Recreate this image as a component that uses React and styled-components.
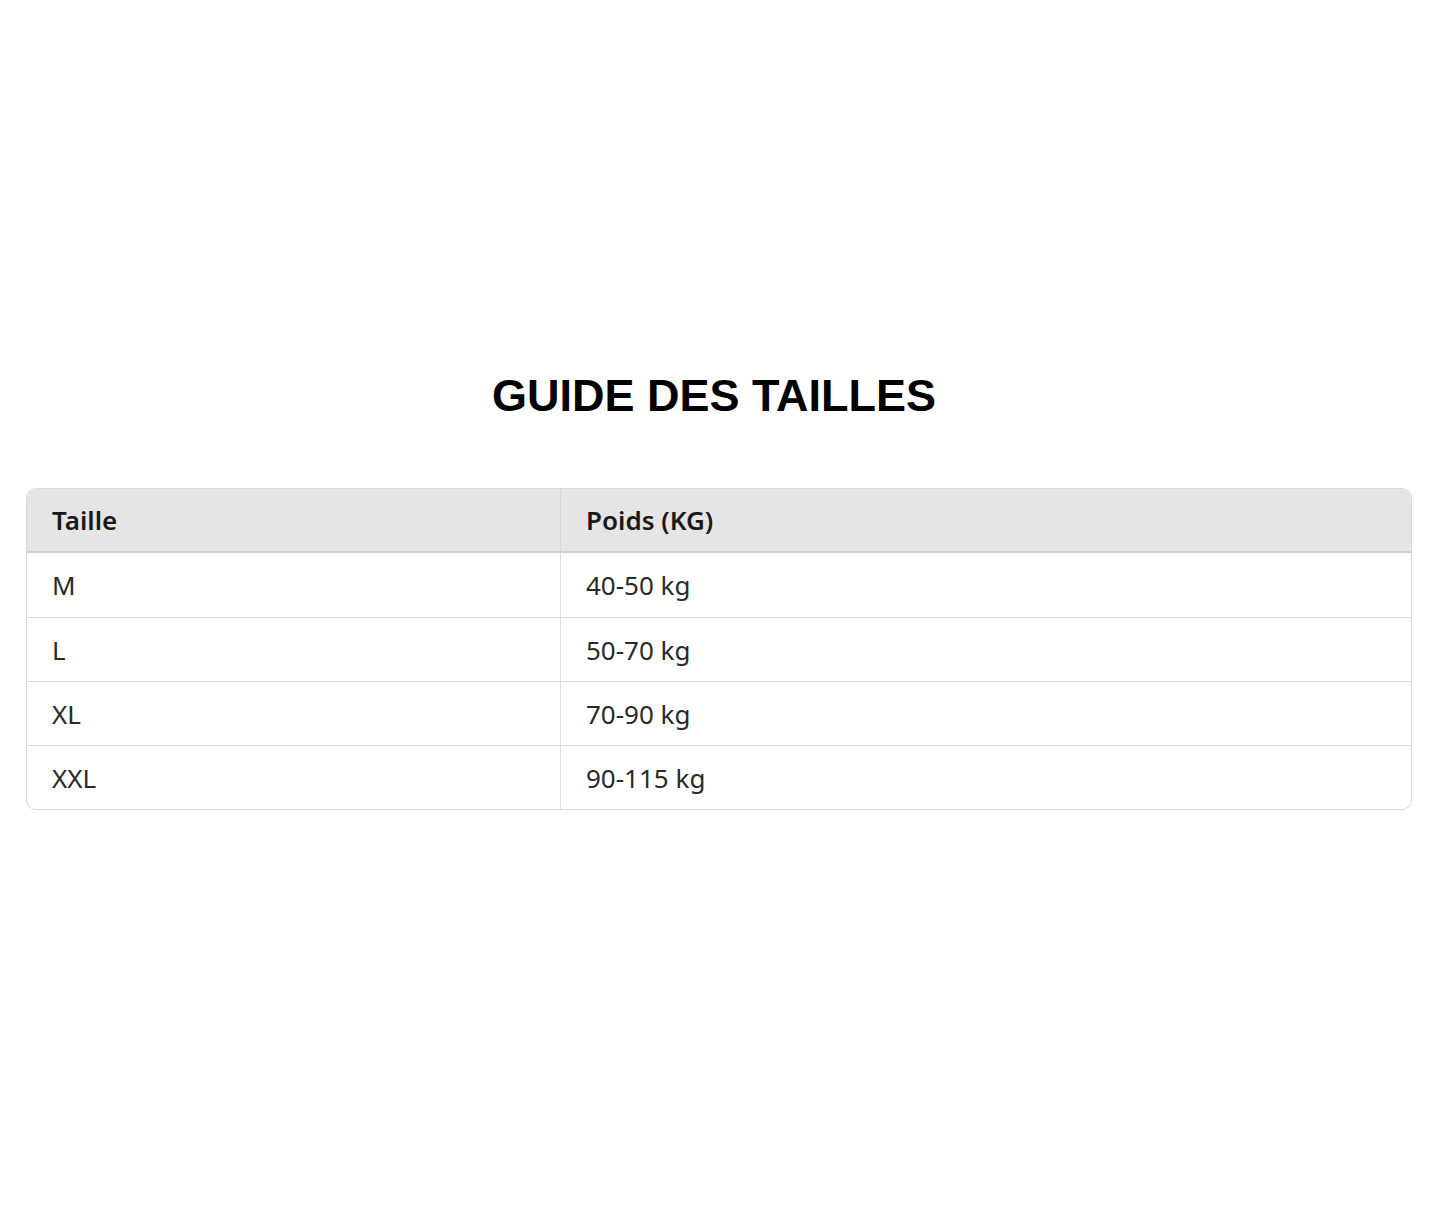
import React from "react";
import styled, { createGlobalStyle } from "styled-components";

const Global = createGlobalStyle`
  html, body { margin: 0; padding: 0; background: #ffffff; }
  body { font-family: "Noto Sans", "Open Sans", sans-serif; }
`;

const Page = styled.main`
  padding: 370px 33px 0 26px;
  box-sizing: border-box;
  width: 1445px;
  min-height: 1225px;
`;

const Title = styled.h1`
  margin: 0 0 66px 0;
  padding-right: 10px;
  text-align: center;
  font-family: "Liberation Sans", Arial, sans-serif;
  font-weight: 700;
  font-size: 45px;
  line-height: 52px;
  color: #000;
  letter-spacing: 0;
`;

const Table = styled.table`
  width: 100%;
  border-collapse: separate;
  border-spacing: 0;
  border: 1px solid #d9d9d9;
  border-radius: 10px;
  overflow: hidden;
  table-layout: fixed;
`;

const HeadCell = styled.th`
  background: #e5e5e5;
  text-align: left;
  font-weight: 600;
  font-size: 26px;
  color: #1a1a1a;
  height: 64px;
  padding: 0 24px 0 25px;
  border-bottom: 2px solid #d0d0d0;
  border-left: ${(p) => (p.$first ? "none" : "1px solid #d6d6d6")};
  width: ${(p) => (p.$first ? "533px" : "auto")};
  box-sizing: border-box;
`;

const Cell = styled.td`
  font-size: 26px;
  color: #2a2a2a;
  height: 64px;
  padding: 0 24px 0 25px;
  border-top: ${(p) => (p.$firstRow ? "none" : "1px solid #dddddd")};
  border-left: ${(p) => (p.$first ? "none" : "1px solid #dddddd")};
  box-sizing: border-box;
`;

const rows = [
  ["M", "40-50 kg"],
  ["L", "50-70 kg"],
  ["XL", "70-90 kg"],
  ["XXL", "90-115 kg"],
];

export default function App() {
  return (
    <>
      <Global />
      <Page>
        <Title>GUIDE DES TAILLES</Title>
        <Table>
          <thead>
            <tr>
              <HeadCell $first>Taille</HeadCell>
              <HeadCell>Poids (KG)</HeadCell>
            </tr>
          </thead>
          <tbody>
            {rows.map(([s, w], i) => (
              <tr key={s}>
                <Cell $first $firstRow={i === 0}>{s}</Cell>
                <Cell $firstRow={i === 0}>{w}</Cell>
              </tr>
            ))}
          </tbody>
        </Table>
      </Page>
    </>
  );
}
